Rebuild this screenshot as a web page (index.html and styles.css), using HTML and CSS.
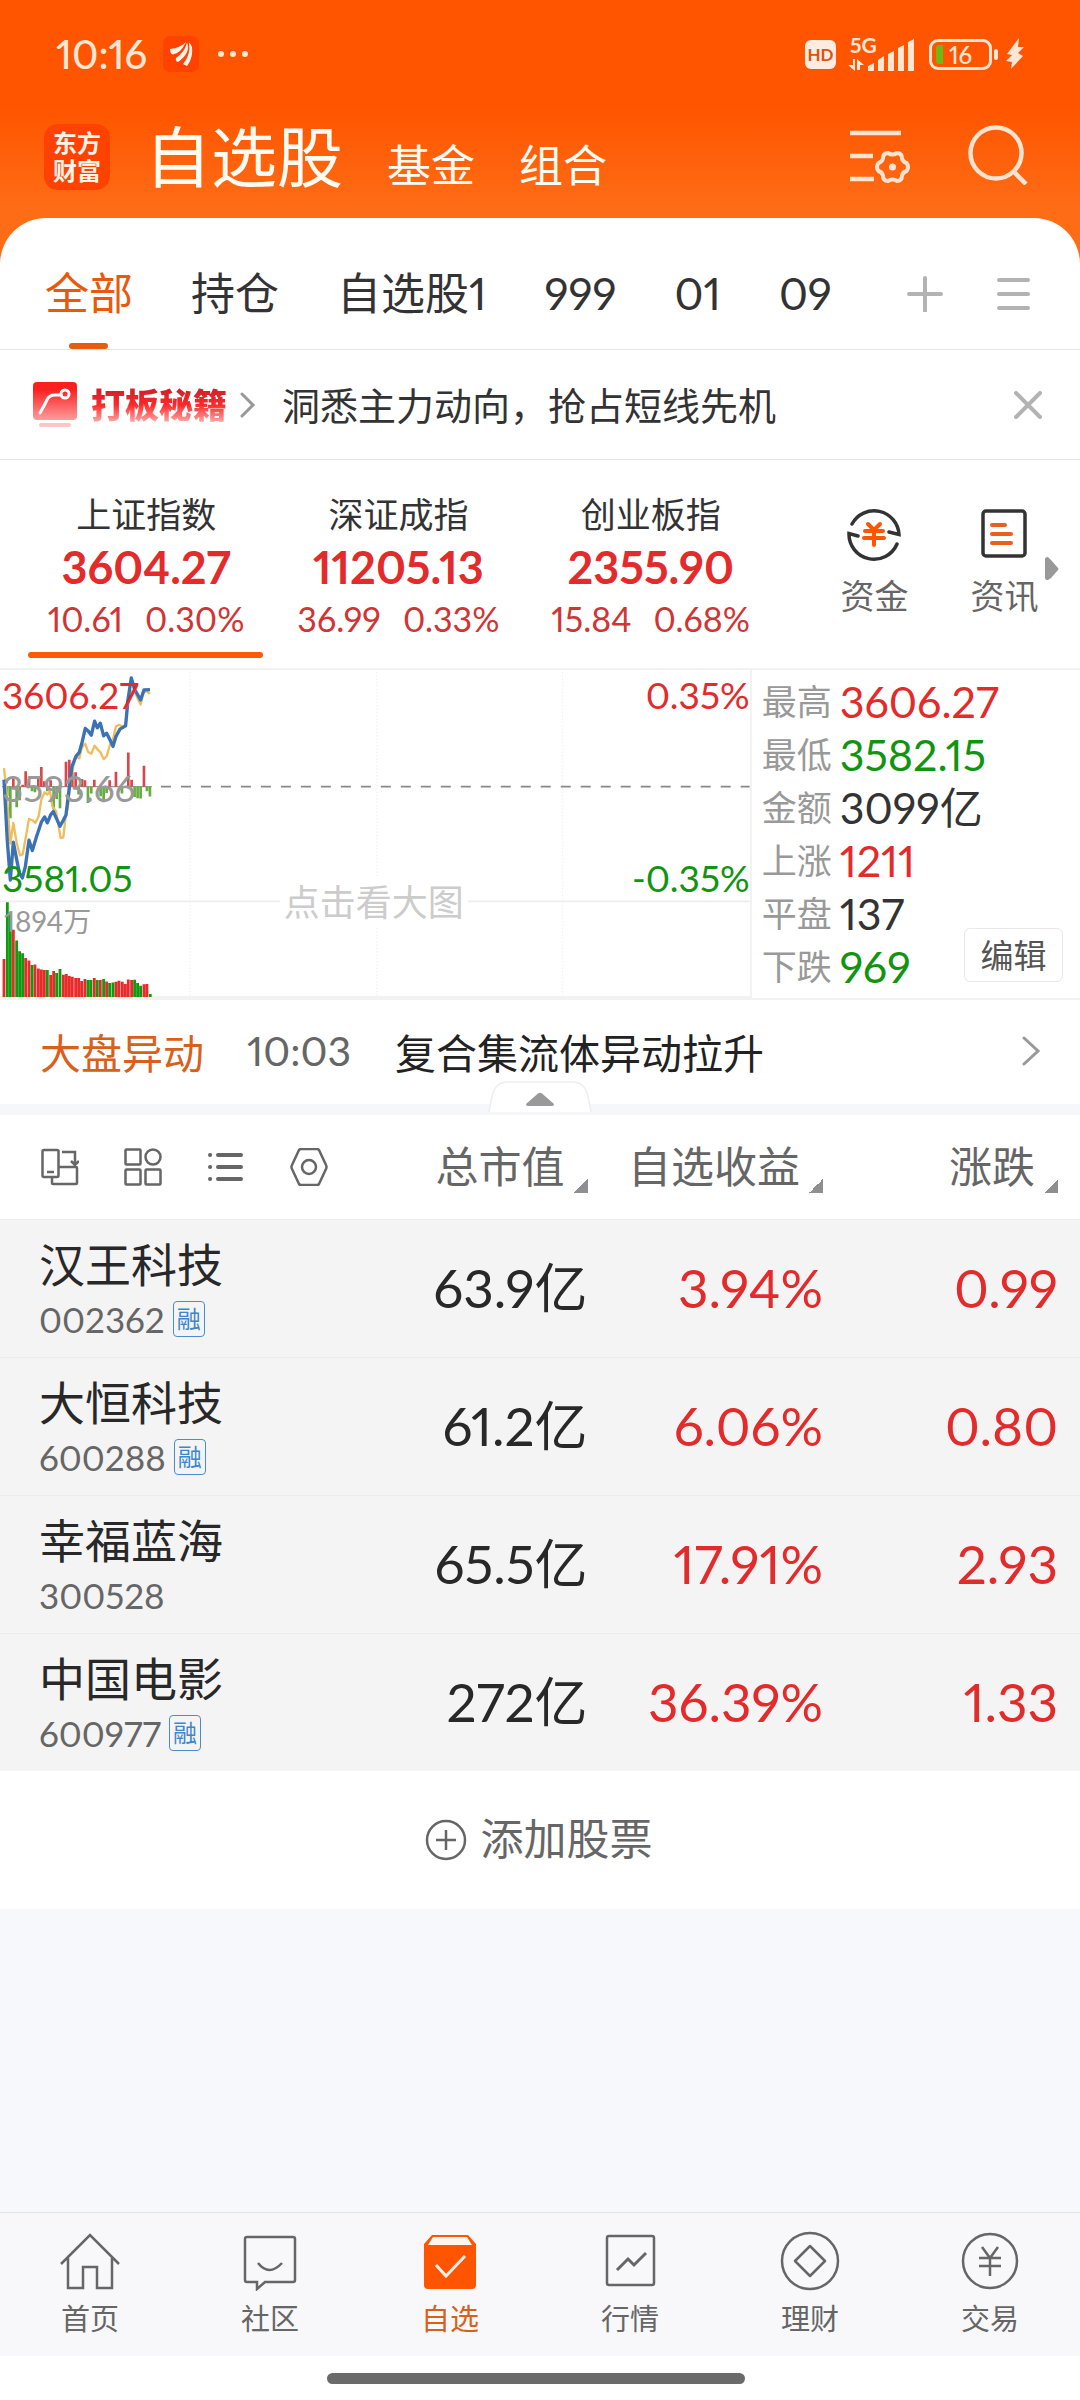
FILE: index.html
```html
<!DOCTYPE html>
<html lang="zh-CN">
<head>
<meta charset="utf-8">
<meta name="viewport" content="width=device-width">
<title>自选股</title>
<link rel="stylesheet" href="styles.css">
</head>
<body>
<header class="top">
  <div class="status">
    <span class="status-time">10:16</span>
    <svg class="status-app" viewBox="0 0 36 36"><rect width="36" height="36" rx="7" fill="#ff4200"/><path d="M7 13Q17 12 23 6Q18 17 10 18.500Q7 18 7 13ZM13 22Q22 16 24 6.500Q28 17 15 26Q12 25 13 22ZM20 28Q28 19 26 6.500Q30 9 29 18Q28 25 24 30Z" fill="#fff4ea"/></svg>
    <svg class="status-dots" viewBox="0 0 32 8"><g fill="#ffe6d5"><circle cx="4" cy="4" r="3"/><circle cx="16" cy="4" r="3"/><circle cx="28" cy="4" r="3"/></g></svg>
    <span class="status-right">
      <span class="hd">HD</span>
      <svg class="signal" viewBox="0 -8 68 52"><g fill="#ffe6d5"><path d="M5 23h2v12L0 29h5zM9 34V23l7 6h-4v5z"/><path d="M20 35v-5l6-3v8zM30 35V24l6-4v15zM40 35V18l6-3v20zM50 35V12l6-3v26zM60 35V6l6-3v32z"/></g><text class="signal-text" x="2" y="17">5G</text></svg>
      <span class="battery"><span class="battery-level"></span>16</span>
      <svg class="bolt" viewBox="0 0 18 32"><path d="M13 0L1 16L6 17L0 23L6 24L5 31L17 18L12 15L18 9H12Z" fill="#ffe6d5"/></svg>
    </span>
  </div>
  <div class="title-bar">
    <span class="logo">东方<br>财富</span>
    <nav class="title-tabs">
      <h1 class="title-main">自选股</h1>
      <a class="title-link" href="#fund">基金</a>
      <a class="title-link" href="#group">组合</a>
    </nav>
    <button class="icon-btn" aria-label="筛选设置"><svg width="60" height="60" viewBox="0 0 60 60" fill="none" stroke="#ffe3d0" stroke-width="4.500"><path d="M0 8h51M0 31h23M0 54h24"/><path stroke-width="4" stroke-linejoin="round" d="M38 28q4.500 3 9 0q5 0 5 5.500q1 3.500 4.500 4.500q3 4 0 8q-3.500 1-4.500 4.500q0 5.500-5 5.500q-4.500-3-9 0q-5 0-5-5.500q-1-3.500-4.500-4.500q-3-4 0-8q3.500-1 4.500-4.500q0-5.500 5-5.500Z"/><circle cx="42.500" cy="42" r="3.500" fill="#ffe3d0" stroke="none"/></svg></button>
    <button class="icon-btn" aria-label="搜索"><svg width="60" height="60" viewBox="0 0 60 60" fill="none" stroke="#ffe3d0" stroke-width="4.500"><circle cx="28" cy="28" r="25.500"/><path d="M45 46l13 13"/></svg></button>
  </div>
</header>

<main class="sheet">
  <nav class="tabs">
    <a class="tab tab-on" href="#all">全部</a>
    <a class="tab" href="#hold">持仓</a>
    <a class="tab" href="#z1">自选股1</a>
    <a class="tab" href="#999">999</a>
    <a class="tab" href="#01">01</a>
    <a class="tab" href="#09">09</a>
    <span class="tab-tools">
      <button class="icon-btn" aria-label="添加分组"><svg width="36" height="36" viewBox="0 0 36 36" stroke="#b3b3b3" stroke-width="4" stroke-linecap="round"><path d="M18 2v33M2 18h32"/></svg></button>
      <button class="icon-btn" aria-label="分组管理"><svg width="36" height="36" viewBox="0 0 36 36" stroke="#b3b3b3" stroke-width="4" stroke-linecap="round"><path d="M4 4h29M4 18h29M4 32h29"/></svg></button>
    </span>
  </nav>

  <section class="promo">
    <svg width="44" height="46" viewBox="0 0 44 46"><defs><linearGradient id="pg" x1="0" y1="0" x2="0" y2="1"><stop offset=".2" stop-color="#fb2020"/><stop offset="1" stop-color="#ff9c9c"/></linearGradient></defs><rect width="44" height="38" rx="4" fill="url(#pg)"/><path d="M7 31Q11 24 14 18Q16 13 22 13H28" fill="none" stroke="#fff" stroke-width="3" stroke-linecap="round"/><circle cx="32" cy="12" r="4" fill="none" stroke="#fff" stroke-width="3"/><rect x="6" y="41" width="32" height="4" rx="2" fill="#ffc4c4"/></svg>
    <b class="promo-name">打板秘籍</b>
    <svg width="16" height="26" viewBox="0 0 16 26" fill="none" stroke="#999" stroke-width="3" stroke-linecap="round"><path d="M2 2l11 11l-11 11"/></svg>
    <a class="promo-text" href="#promo">洞悉主力动向，抢占短线先机</a>
    <button class="icon-btn" aria-label="关闭"><svg width="28" height="28" viewBox="0 0 28 28" stroke="#b3b3b3" stroke-width="4" stroke-linecap="round"><path d="M2 2l24 24M26 2l-24 24"/></svg></button>
  </section>

  <section class="indexes">
    <a class="index index-on" href="#sh"><span class="index-name">上证指数</span><b class="index-value">3604.27</b><span class="index-change"><span>10.61</span><span>0.30%</span></span></a>
    <a class="index" href="#sz"><span class="index-name">深证成指</span><b class="index-value">11205.13</b><span class="index-change"><span>36.99</span><span>0.33%</span></span></a>
    <a class="index" href="#cy"><span class="index-name">创业板指</span><b class="index-value">2355.90</b><span class="index-change"><span>15.84</span><span>0.68%</span></span></a>
    <div class="shortcuts">
      <a class="shortcut" href="#money"><svg width="56" height="56" viewBox="0 0 56 56" fill="none" stroke="#333" stroke-width="3.500" stroke-linecap="round"><path d="M6 18A25 25 0 0 1 53 28.500L43 26M51 38A25 25 0 0 1 3 27.500L12 30"/><path stroke="#ff5500" stroke-width="4" d="M22 18l6 6l6-6M19 25h18M18 32h20M28 24v15"/></svg><span>资金</span></a>
      <a class="shortcut" href="#news"><svg width="56" height="56" viewBox="0 0 56 56" fill="none" stroke="#333" stroke-width="3.500" stroke-linecap="round"><rect x="7" y="5" width="42" height="45" rx="3"/><path stroke="#e8601c" stroke-width="4" d="M16 19h13M16 28h19M16 37h19"/></svg><span>资讯</span></a>
      <svg class="more" width="14" height="24" viewBox="0 0 14 24"><path d="M0 2Q0 0 3 0L6 3L13 11Q14 12 13 13L6 21L3 23Q0 23 0 21Z" fill="#999"/></svg>
    </div>
  </section>

  <section class="market">
    <div class="chart">
      <svg class="chart-plot" viewBox="0 30 2250 987" preserveAspectRatio="none" fill="none">
        <path d="M570 36V1014M1131 36V1014M1689 36V1014" stroke="#ececee" stroke-width="3" stroke-dasharray="4 6"/>
        <path d="M0 726H2250M0 1014H2250" stroke="#eeeeef" stroke-width="5"/>
        <path d="M483 381H2250" stroke="#888" stroke-width="5" stroke-dasharray="30 30"/>
        <path d="M6 381H456" stroke="#999" stroke-width="4"/>
        <path stroke="#d8474b" stroke-width="8" d="M40 381V352M68 381V375M77 381V335M87 381V358M115 381V356M124 381V322M133 381V365M152 381V362M198 381V306M208 381V300M217 381V338M227 381V338M246 381V358M255 381V362M283 381V360M329 381V362M348 381V336M385 381V278M395 381V360M432 381V318"/>
        <path stroke="#63ae3e" stroke-width="8" d="M22 381V410M31 381V476M50 381V443M59 381V422M96 381V395M105 381V398M142 381V395M161 381V450M170 381V418M180 381V446M236 381V405M264 381V430M274 381V402M302 381V410M311 381V428M320 381V400M366 381V402M404 381V412M413 381V416M422 381V417M441 381V395M450 381V411"/>
        <path stroke="#f0bd5c" stroke-width="7" stroke-linejoin="round" d="M12 325L20 400L31 552L40 490L50 550L60 588L68 585L78 530L87 478L97 482L106 490L116 470L124 420L134 398L142 405L150 393L157 440L168 455L176 500L182 536L190 534L196 480L204 440L210 380L220 320L228 290L238 296L246 262L256 252L264 276L274 282L284 258L292 268L302 278L311 298L320 290L330 255L339 240L348 200L357 195L368 200L377 195L384 130L394 95L404 92L414 118L422 134L430 100L438 92L450 102"/>
        <path stroke="#3a72b5" stroke-width="10" stroke-linejoin="round" d="M12 360L22 545L31 662L40 548L50 600L58 640L67 656L76 622L87 542L97 573L110 530L124 488L134 472L142 490L152 466L160 456L170 478L180 500L190 482L198 466L206 400L216 320L228 290L238 278L247 245L256 206L264 213L274 226L284 184L292 204L301 190L311 228L320 220L330 240L339 260L348 230L360 208L377 198L384 120L394 54L404 88L414 106L422 120L432 90L450 89"/>
        <path stroke="#e92a2a" stroke-width="8.500" d="M12 1014V900M40 1014V812M77 1014V897M87 1014V904M105 1014V916M115 1014V928M124 1014V931M133 1014V933M152 1014V948M161 1014V936M190 1014V947M199 1014V945M208 1014V951M217 1014V953M227 1014V957M236 1014V957M245 1014V966M255 1014V960M283 1014V957M301 1014V963M320 1014V967M348 1014V968M357 1014V965M367 1014V968M376 1014V975M385 1014V961M395 1014V963M432 1014V976M441 1014V975"/>
        <path stroke="#11990f" stroke-width="8.500" d="M22 1014V729M31 1014V760M50 1014V844M59 1014V876M68 1014V882M96 1014V918M142 1014V933M170 1014V942M180 1014V930M264 1014V963M273 1014V963M292 1014V963M311 1014V960M329 1014V972M339 1014V970M404 1014V962M413 1014V972M422 1014V980M451 1014V1005"/>
      </svg>
      <span class="mark mark-high up">3606.27</span>
      <span class="mark mark-mid">3593.66</span>
      <span class="mark mark-low down">3581.05</span>
      <span class="mark mark-vol">1894万</span>
      <span class="mark mark-high mark-right up">0.35%</span>
      <span class="mark mark-low mark-right down">-0.35%</span>
      <span class="mark mark-hint">点击看大图</span>
    </div>
    <div class="stats">
      <dl class="stat-list">
        <div><dt>最高</dt><dd class="up">3606.27</dd></div>
        <div><dt>最低</dt><dd class="down">3582.15</dd></div>
        <div><dt>金额</dt><dd>3099亿</dd></div>
        <div><dt>上涨</dt><dd class="up">1211</dd></div>
        <div><dt>平盘</dt><dd>137</dd></div>
        <div><dt>下跌</dt><dd class="down">969</dd></div>
      </dl>
      <button class="edit">编辑</button>
    </div>
  </section>

  <a class="alert" href="#alert">
    <span class="alert-tag">大盘异动</span>
    <time class="alert-time">10:03</time>
    <span class="alert-text">复合集流体异动拉升</span>
    <svg width="18" height="30" viewBox="0 0 18 30" fill="none" stroke="#999" stroke-width="3" stroke-linecap="round"><path d="M2 2l14 13l-14 13"/></svg>
  </a>
  <div class="strip">
    <button class="fold" aria-label="收起"><svg width="104" height="32" viewBox="0 0 104 32"><path d="M1 31L4 15Q7 1 20 1H84Q97 1 100 15L103 31" fill="#fff" stroke="#eceef0" stroke-width="1.500"/><path d="M38 23L50 12.500Q52 11 54 12.500L66 23Q66 25 64 25H40Q38 25 38 23Z" fill="#999"/></svg></button>
  </div>

  <table class="stocks">
    <thead>
      <tr>
        <th class="tools"><div class="tool-row">
          <button class="icon-btn" aria-label="横屏"><svg width="38" height="38" viewBox="0 0 38 38" fill="none" stroke="#666" stroke-width="2.500"><rect x="1.500" y="2" width="16" height="27" rx="1.500"/><path d="M6 24h7M11 30v5q0 1 1 1h23q1 0 1-1V20q0-1-1-1H18M21 4h13v12M30 13l4 4l4-4"/></svg></button>
          <button class="icon-btn" aria-label="宫格"><svg width="38" height="38" viewBox="0 0 38 38" fill="none" stroke="#666" stroke-width="2.500"><rect x="1.500" y="1.500" width="15" height="15" rx="1"/><circle cx="29" cy="9" r="7.500"/><rect x="1.500" y="21.500" width="15" height="15" rx="1"/><rect x="21.500" y="21.500" width="15" height="15" rx="1"/></svg></button>
          <button class="icon-btn" aria-label="列表"><svg width="38" height="38" viewBox="0 0 38 38" fill="none" stroke="#666" stroke-width="4" stroke-linecap="round"><path d="M3 7h.1M3 19h.1M3 31h.1M11 7h23M11 19h23M11 31h23"/></svg></button>
          <button class="icon-btn" aria-label="设置"><svg width="38" height="38" viewBox="0 0 38 38" fill="none" stroke="#666" stroke-width="2.500" stroke-linejoin="round"><path d="M11 1H27Q28 1 29 2L36 17Q37 19 36 21L29 36Q28 37 27 37H11Q10 37 9 36L2 21Q1 19 2 17L9 2Q10 1 11 1Z"/><circle cx="19" cy="19" r="7"/></svg></button>
        </div></th>
        <th><button class="sort">总市值</button></th>
        <th><button class="sort">自选收益</button></th>
        <th><button class="sort">涨跌</button></th>
      </tr>
    </thead>
    <tbody>
      <tr><td class="who"><span class="name">汉王科技</span><span class="code">002362<i class="badge">融</i></span></td><td>63.9亿</td><td class="up">3.94%</td><td class="up">0.99</td></tr>
      <tr><td class="who"><span class="name">大恒科技</span><span class="code">600288<i class="badge">融</i></span></td><td>61.2亿</td><td class="up">6.06%</td><td class="up">0.80</td></tr>
      <tr><td class="who"><span class="name">幸福蓝海</span><span class="code">300528</span></td><td>65.5亿</td><td class="up">17.91%</td><td class="up">2.93</td></tr>
      <tr><td class="who"><span class="name">中国电影</span><span class="code">600977<i class="badge">融</i></span></td><td>272亿</td><td class="up">36.39%</td><td class="up">1.33</td></tr>
    </tbody>
  </table>
  <button class="add"><svg width="42" height="42" viewBox="0 0 42 42" fill="none" stroke="#666" stroke-width="2.500"><circle cx="21" cy="21" r="19"/><path d="M21 11v20M11 21h20"/></svg><span>添加股票</span></button>
</main>

<nav class="bottom">
  <a class="nav-item" href="#home"><svg width="60" height="60" viewBox="0 0 60 60" fill="none" stroke="#666" stroke-width="2.500"><path d="M1 33L30 4L59 33M8 27V57H23V36H37V57H52V27"/></svg>首页</a>
  <a class="nav-item" href="#club"><svg width="60" height="60" viewBox="0 0 60 60" fill="none" stroke="#666" stroke-width="2.500"><path d="M7 6H53Q55 6 55 8V49Q55 51 53 51H25L17 58V51H7Q5 51 5 49V8Q5 6 7 6Z"/><path d="M18 32Q29 46 42 32"/></svg>社区</a>
  <a class="nav-item nav-on" href="#mine"><svg width="60" height="60" viewBox="0 0 60 60"><path d="M12 4H48L56 13V54Q56 58 52 58H8Q4 58 4 54V13Z" fill="#ff5500"/><path d="M13 6H47L52 14H8Z" fill="#fff4ee"/><path d="M16 34L26 45L45 25" fill="none" stroke="#fff0e6" stroke-width="3"/></svg>自选</a>
  <a class="nav-item" href="#quote"><svg width="60" height="60" viewBox="0 0 60 60" fill="none" stroke="#666" stroke-width="2.500"><rect x="7" y="5" width="47" height="49" rx="2"/><path d="M17 39L28 28L34 34L46 22" stroke-width="3"/></svg>行情</a>
  <a class="nav-item" href="#wealth"><svg width="60" height="60" viewBox="0 0 60 60" fill="none" stroke="#666" stroke-width="2.500"><circle cx="30" cy="30" r="28"/><path stroke-linejoin="round" d="M30 15L45 30L30 45L15 30Z"/></svg>理财</a>
  <a class="nav-item" href="#trade"><svg width="60" height="60" viewBox="0 0 60 60" fill="none" stroke="#666" stroke-width="2.500"><circle cx="30" cy="30" r="27"/><path d="M22 16L30 27L38 16M19 27H41M19 35H41M30 27V45"/></svg>交易</a>
</nav>
<div class="home-area"><span class="home-bar"></span></div>
</body>
</html>
```
FILE: styles.css
```css
* { box-sizing: border-box; margin: 0; padding: 0; }

body {
  min-height: 100vh;
  display: flex;
  flex-direction: column;
  background: #f7f8fb;
  color: #333;
  font-family: Lato, "Noto Sans CJK SC", sans-serif;
  font-variant-numeric: proportional-nums;
}

a { color: inherit; text-decoration: none; }
button { border: 0; background: none; color: inherit; font: inherit; font-variant-numeric: inherit; }
svg { display: block; flex: none; }
.icon-btn { display: block; flex: none; }
.up { color: #e32b2b; }
.down { color: #11940f; }

/* header */
.top {
  height: 270px;
  margin-bottom: -52px;
  background: linear-gradient(#ff5500 0, #ff5500 108px, #ff6c16 208px);
}
.status {
  height: 108px;
  padding: 0 56px;
  display: flex;
  align-items: center;
  color: #ffe6d5;
}
.status-time { width: 107px; font-size: 40px; font-weight: 500; }
.status-app { width: 36px; height: 36px; }
.status-dots { width: 32px; height: 8px; margin-left: 18px; }
.status-right { margin-left: auto; display: flex; align-items: center; }
.hd {
  width: 31px;
  height: 29px;
  border-radius: 6px;
  background: #ffece0;
  color: #e0510a;
  font-size: 17px;
  font-weight: 700;
  line-height: 29px;
  text-align: center;
}
.signal { width: 68px; height: 52px; margin-left: 12px; }
.signal-text { font-size: 21px; font-weight: 700; fill: #ffe6d5; }
.battery {
  position: relative;
  width: 63px;
  height: 31px;
  margin: 0 17px 0 13px;
  border: 3px solid #ffe6d5;
  border-radius: 9px;
  font-size: 24px;
  font-weight: 500;
  line-height: 25px;
  text-align: center;
}
.battery::after {
  content: "";
  position: absolute;
  top: 7px;
  right: -9px;
  width: 4px;
  height: 11px;
  border-radius: 2px;
  background: #ffe6d5;
}
.battery-level {
  position: absolute;
  left: 4px;
  top: 3px;
  width: 7px;
  height: 19px;
  border-radius: 3px 0 0 3px;
  background: #6cb814;
}
.bolt { width: 18px; height: 32px; margin-left: -3px; }
.title-bar {
  height: 98px;
  padding: 0 52px 0 44px;
  display: flex;
  align-items: center;
}
.logo {
  width: 66px;
  height: 66px;
  border-radius: 14px;
  background: #ff4200;
  color: #fff4ea;
  font-size: 24px;
  font-weight: 700;
  line-height: 28px;
  padding-top: 5px;
  text-align: center;
}
.title-tabs { flex: 1; display: flex; align-items: baseline; margin-left: 35px; color: #fffaf2; }
.title-main { font-size: 66px; font-weight: 400; line-height: 98px; }
.title-link { margin-left: 44px; font-size: 44px; }
.title-bar .icon-btn { margin-bottom: 4px; }
.title-bar .icon-btn + .icon-btn { margin-left: 58px; }

/* sheet */
.sheet { background: #fff; border-radius: 46px 46px 0 0; }
.tabs {
  height: 132px;
  padding: 20px 49px 0 45px;
  display: flex;
  gap: 58px;
  border-bottom: 1px solid #e4e4e4;
  font-size: 44px;
  line-height: 111px;
}
.tab-on { position: relative; color: #e8590c; }
.tab-on::after {
  content: "";
  position: absolute;
  left: 24px;
  bottom: 0;
  width: 39px;
  height: 6px;
  border-radius: 3px;
  background: #ea5a10;
}
.tab-tools { margin-left: auto; display: flex; align-items: center; gap: 52px; }
.promo {
  height: 110px;
  padding: 0 38px 0 33px;
  display: flex;
  align-items: center;
  border-bottom: 1px solid #e4e4e4;
}
.promo-name {
  margin: 0 13px 0 14px;
  padding-bottom: 3px;
  font-size: 34px;
  font-weight: 900;
  background: linear-gradient(#d8212a 25%, #fb2a2a 50%, #ff9c9c 80%);
  -webkit-background-clip: text;
  background-clip: text;
  color: transparent;
}
.promo-text { flex: 1; margin-left: 26px; padding-bottom: 3px; font-size: 38px; }

.indexes {
  height: 210px;
  padding-left: 20px;
  display: flex;
  border-bottom: 2px solid #f2f2f3;
}
.index {
  position: relative;
  flex: 0 0 23.8%;
  padding-top: 28px;
  display: flex;
  flex-direction: column;
  align-items: center;
}
.index-on::after {
  content: "";
  position: absolute;
  left: 8px;
  right: 9px;
  bottom: 10px;
  height: 6px;
  border-radius: 3px;
  background: #fa5a0a;
}
.index-name { font-size: 35px; line-height: 52px; }
.index-value { font-size: 45px; line-height: 54px; color: #e32b2b; }
.index-change { display: flex; gap: 22px; font-size: 34px; line-height: 50px; color: #d03434; }
.shortcuts { position: relative; flex: 1; display: flex; justify-content: center; gap: 62px; padding: 46px 0 0 22px; }
.shortcut { display: flex; flex-direction: column; align-items: center; font-size: 34px; line-height: 50px; gap: 9px; color: #666; }
.more { position: absolute; right: 21px; top: 97px; }

.market { display: flex; border-bottom: 2px solid #f2f2f3; }
.chart { position: relative; flex: 0 0 69.6%; height: 328px; border-right: 2px solid #f2f2f3; }
.chart-plot { width: 100%; height: 100%; }
.mark { position: absolute; left: 2px; font-size: 37px; line-height: 40px; }
.mark-high { top: 5px; }
.mark-mid { top: 98px; color: #999; }
.mark-low { top: 188px; }
.mark-vol { top: 231px; left: 4px; font-size: 28px; line-height: 40px; color: #999; }
.mark-right { left: auto; right: 0; }
.mark-hint {
  left: 50%;
  top: 208px;
  width: 188px;
  margin-left: -95px;
  background: #fff;
  font-size: 36px;
  line-height: 48px;
  text-align: center;
  color: #ccc;
}
.stats { position: relative; flex: 1; padding: 5px 0 0 10px; }
.stat-list div { display: flex; align-items: center; height: 53px; }
.stat-list dt { width: 78px; font-size: 35px; line-height: 53px; color: #999; }
.stat-list dd { font-size: 43px; line-height: 53px; }
.edit {
  position: absolute;
  right: 17px;
  bottom: 16px;
  width: 99px;
  height: 54px;
  border: 1px solid #e8e8e8;
  border-radius: 6px;
  background: #fff;
  font-size: 33px;
  line-height: 48px;
  color: #555;
}

.alert {
  height: 104px;
  padding: 0 40px 3px;
  display: flex;
  align-items: center;
  font-size: 41px;
}
.alert-tag { color: #d9601a; }
.alert-time { width: 148px; margin-left: 43px; color: #666; }
.alert-text { flex: 1; color: #222; }
.strip { position: relative; height: 11px; background: #f5f7fa; }
.fold { position: absolute; left: 50%; bottom: 2px; margin-left: -52px; }

/* stock table */
.stocks { width: 100%; border-collapse: collapse; table-layout: fixed; text-align: right; }
.stocks th { width: 21.8%; height: 104px; font-weight: 400; vertical-align: middle; color: #666; }
.stocks th:first-child { width: auto; }
.stocks th:last-child { width: 23.8%; }
.stocks th:last-child, .stocks td:last-child { padding-right: 22px; }
.tool-row { display: flex; gap: 45px; padding-left: 41px; }
.sort { position: relative; padding-right: 23px; font-size: 43px; line-height: 64px; white-space: nowrap; }
.sort::after {
  content: "";
  position: absolute;
  right: 0;
  bottom: 6px;
  width: 14px;
  height: 14px;
  background: linear-gradient(135deg, transparent 50%, #8e8e93 50%);
}
.stocks tbody { background: #f4f4f4; }
.stocks td { height: 138px; border-top: 1px solid #ececec; font-size: 53px; line-height: 64px; }
.stocks td:not(.up):not(.who) { color: #282828; }
.stocks .who { padding-left: 39px; text-align: left; color: #282828; }
.name { display: block; font-size: 46px; line-height: 60px; padding-top: 2px; }
.code { display: flex; align-items: center; gap: 8px; font-size: 35px; line-height: 48px; color: #666; }
.badge {
  width: 32px;
  height: 36px;
  border: 1px solid #4a8ccc;
  border-radius: 4px;
  font-size: 24px;
  font-style: normal;
  line-height: 34px;
  text-align: center;
  color: #3f85c9;
}
.add {
  width: 100%;
  height: 138px;
  padding-right: 3px;
  display: flex;
  align-items: center;
  justify-content: center;
  gap: 14px;
  font-size: 43px;
  line-height: 60px;
  color: #666;
}
.add span { padding-bottom: 3px; }

/* bottom navigation */
.bottom {
  margin-top: auto;
  height: 144px;
  display: flex;
  border-top: 1px solid #e2e2e4;
  background: #f8f8fb;
}
.nav-item {
  flex: 1;
  padding-top: 18px;
  display: flex;
  flex-direction: column;
  align-items: center;
  gap: 7px;
  font-size: 29px;
  line-height: 42px;
  color: #666;
}
.nav-on { color: #d9601a; }
.home-area { height: 44px; padding: 17px 8px 0 0; background: #fff; }
.home-bar { display: block; width: 39%; height: 11px; margin: 0 auto; border-radius: 6px; background: #6a6a6a; }
```
